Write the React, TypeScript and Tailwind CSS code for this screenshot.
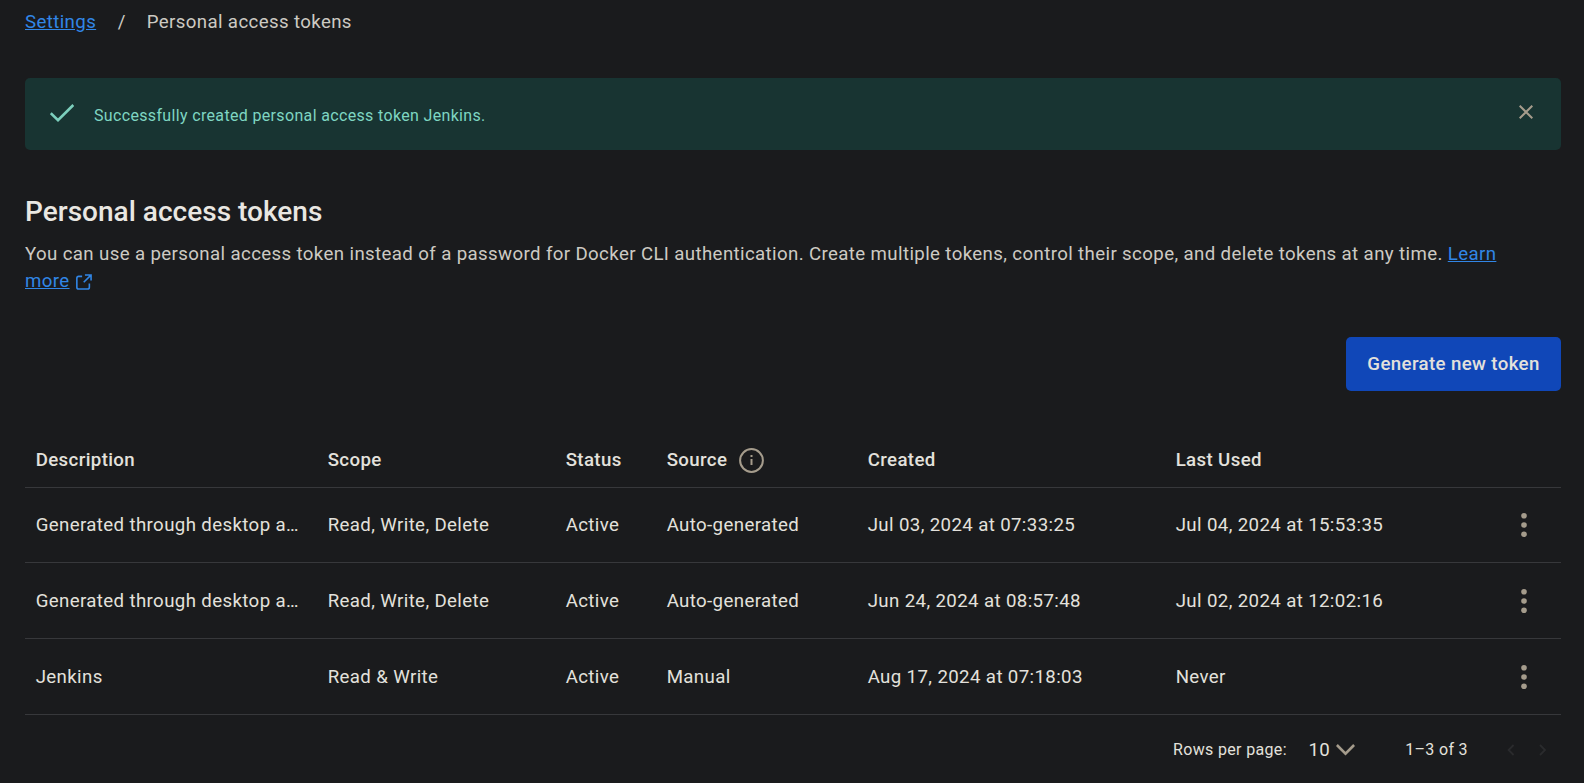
import React from "react";

const rows = [
  { d: "Generated through desktop a…", scope: "Read, Write, Delete", source: "Auto-generated", created: "Jul 03, 2024 at 07:33:25", used: "Jul 04, 2024 at 15:53:35", height: "h-[75px]" },
  { d: "Generated through desktop a…", scope: "Read, Write, Delete", source: "Auto-generated", created: "Jun 24, 2024 at 08:57:48", used: "Jul 02, 2024 at 12:02:16", height: "h-[76px] pt-px" },
  { d: "Jenkins", scope: "Read & Write", source: "Manual", created: "Aug 17, 2024 at 07:18:03", used: "Never", height: "h-[76px] pt-px" },
];

const columns = "grid grid-cols-[292px_238px_101px_201px_308px_385px] items-center border-b border-[#37383b] pl-[10.67px]";

function Dots() {
  return (
    <svg className="block" width="6" height="24" viewBox="0 0 6 24" fill="#a59c8c">
      <circle cx="3" cy="2.8" r="2.8" />
      <circle cx="3" cy="12" r="2.8" />
      <circle cx="3" cy="21.2" r="2.8" />
    </svg>
  );
}

export default function App() {
  return (
    <div className="flex h-[783px] w-[1584px] flex-col bg-[#1a1b1d] pr-[23px] pl-[25px] font-['Roboto',sans-serif] text-[18.67px] tracking-[0.377px] text-[#e3e1dc]">
      <nav className="flex h-[78px] shrink-0 items-start pt-[8px] leading-[28px]">
        <a className="text-[#3186e6] underline" href="#">Settings</a>
        <span className="ml-[21.5px] text-[#cdcac3]">/</span>
        <span className="ml-[21px] text-[#cdcac3]">Personal access tokens</span>
      </nav>

      <div className="flex h-[72px] shrink-0 items-center rounded-[5px] bg-[#183432] pr-[28px] pl-[25px]">
        <svg width="24" height="18" viewBox="0 0 24 18" fill="none" stroke="#7ccfbd" strokeWidth="2.6" className="-mt-[2px]">
          <path d="M0.8 9.2L8 16.2L23.3 1" />
        </svg>
        <p className="ml-[20px] pt-[4px] text-[16px] leading-[24px] tracking-[0.34px] text-[#7fd6c2]">Successfully created personal access token Jenkins.</p>
        <button aria-label="Close" className="-mt-[4px] ml-auto">
          <svg className="block" width="14" height="14" viewBox="0 0 14 14" fill="none" stroke="#a59c8c" strokeWidth="2">
            <path d="M0.7 0.7L13.3 13.3M13.3 0.7L0.7 13.3" />
          </svg>
        </button>
      </div>

      <h1 className="mt-[44px] shrink-0 text-[28px] leading-[36px] font-medium tracking-[0.02px] text-[#e9e7e2]">Personal access tokens</h1>
      <p className="mt-[11px] shrink-0 leading-[27px] text-[#cdcac3]">
        You can use a personal access token instead of a password for Docker CLI authentication. Create multiple tokens, control their scope, and delete tokens at any time.{" "}
        <a className="text-[#3186e6]" href="#">
          <span className="underline">Learn<br />more</span>
          <svg className="ml-[6.5px] inline-block align-[-3px]" width="16" height="16" viewBox="0 0 17 17" fill="none" stroke="#3186e6" strokeWidth="1.7">
            <path d="M6.5 2.5H2.8Q0.9 2.5 0.9 4.4V14.1Q0.9 16 2.8 16H12.3Q14.2 16 14.2 14.1V10M9.5 1H16V6.8M15.6 1.4L8.2 8.8" />
          </svg>
        </a>
      </p>

      <div className="mt-[42px] flex shrink-0 justify-end">
        <button className="h-[54px] w-[215px] rounded-[5px] bg-[#1047b8] font-medium">Generate new token</button>
      </div>

      <div className="mt-[42px] shrink-0">
        <div className={columns + " h-[55px] font-medium"}>
          <span>Description</span>
          <span>Scope</span>
          <span>Status</span>
          <span className="flex items-center">
            Source
            <svg className="mt-px ml-[11.5px]" width="25" height="25" viewBox="0 0 25 25" fill="none" stroke="#a59c8c">
              <circle cx="12.5" cy="12.5" r="11.4" strokeWidth="2" />
              <path d="M12.5 11V17M12.5 7V9" strokeWidth="2" />
            </svg>
          </span>
          <span>Created</span>
          <span>Last Used</span>
        </div>
        {rows.map((r, i) => (
          <div key={i} className={columns + " " + r.height}>
            <span className="whitespace-nowrap">{r.d}</span>
            <span>{r.scope}</span>
            <span>Active</span>
            <span>{r.source}</span>
            <span>{r.created}</span>
            <span className="flex items-center">
              {r.used}
              <span className="mr-[34px] ml-auto"><Dots /></span>
            </span>
          </div>
        ))}
      </div>

      <div className="flex h-[69px] shrink-0 items-center pl-[1148px]">
        <span className="text-[16px] tracking-[0.34px]">Rows per page:</span>
        <span className="ml-[21.5px]">10</span>
        <svg className="ml-[6px]" width="19" height="12" viewBox="0 0 19 12" fill="none" stroke="#a59c8c" strokeWidth="2.6">
          <path d="M0.9 1L9.5 9.6L18.1 1" />
        </svg>
        <span className="ml-[50px] text-[16px] tracking-[0.34px]">1–3 of 3</span>
        <svg className="ml-[39px]" width="40" height="12" viewBox="0 0 40 12" fill="none" stroke="#2a2b2d" strokeWidth="1.8">
          <path d="M6.6 1L1.6 6L6.6 11M33 1L38 6L33 11" />
        </svg>
      </div>
    </div>
  );
}
